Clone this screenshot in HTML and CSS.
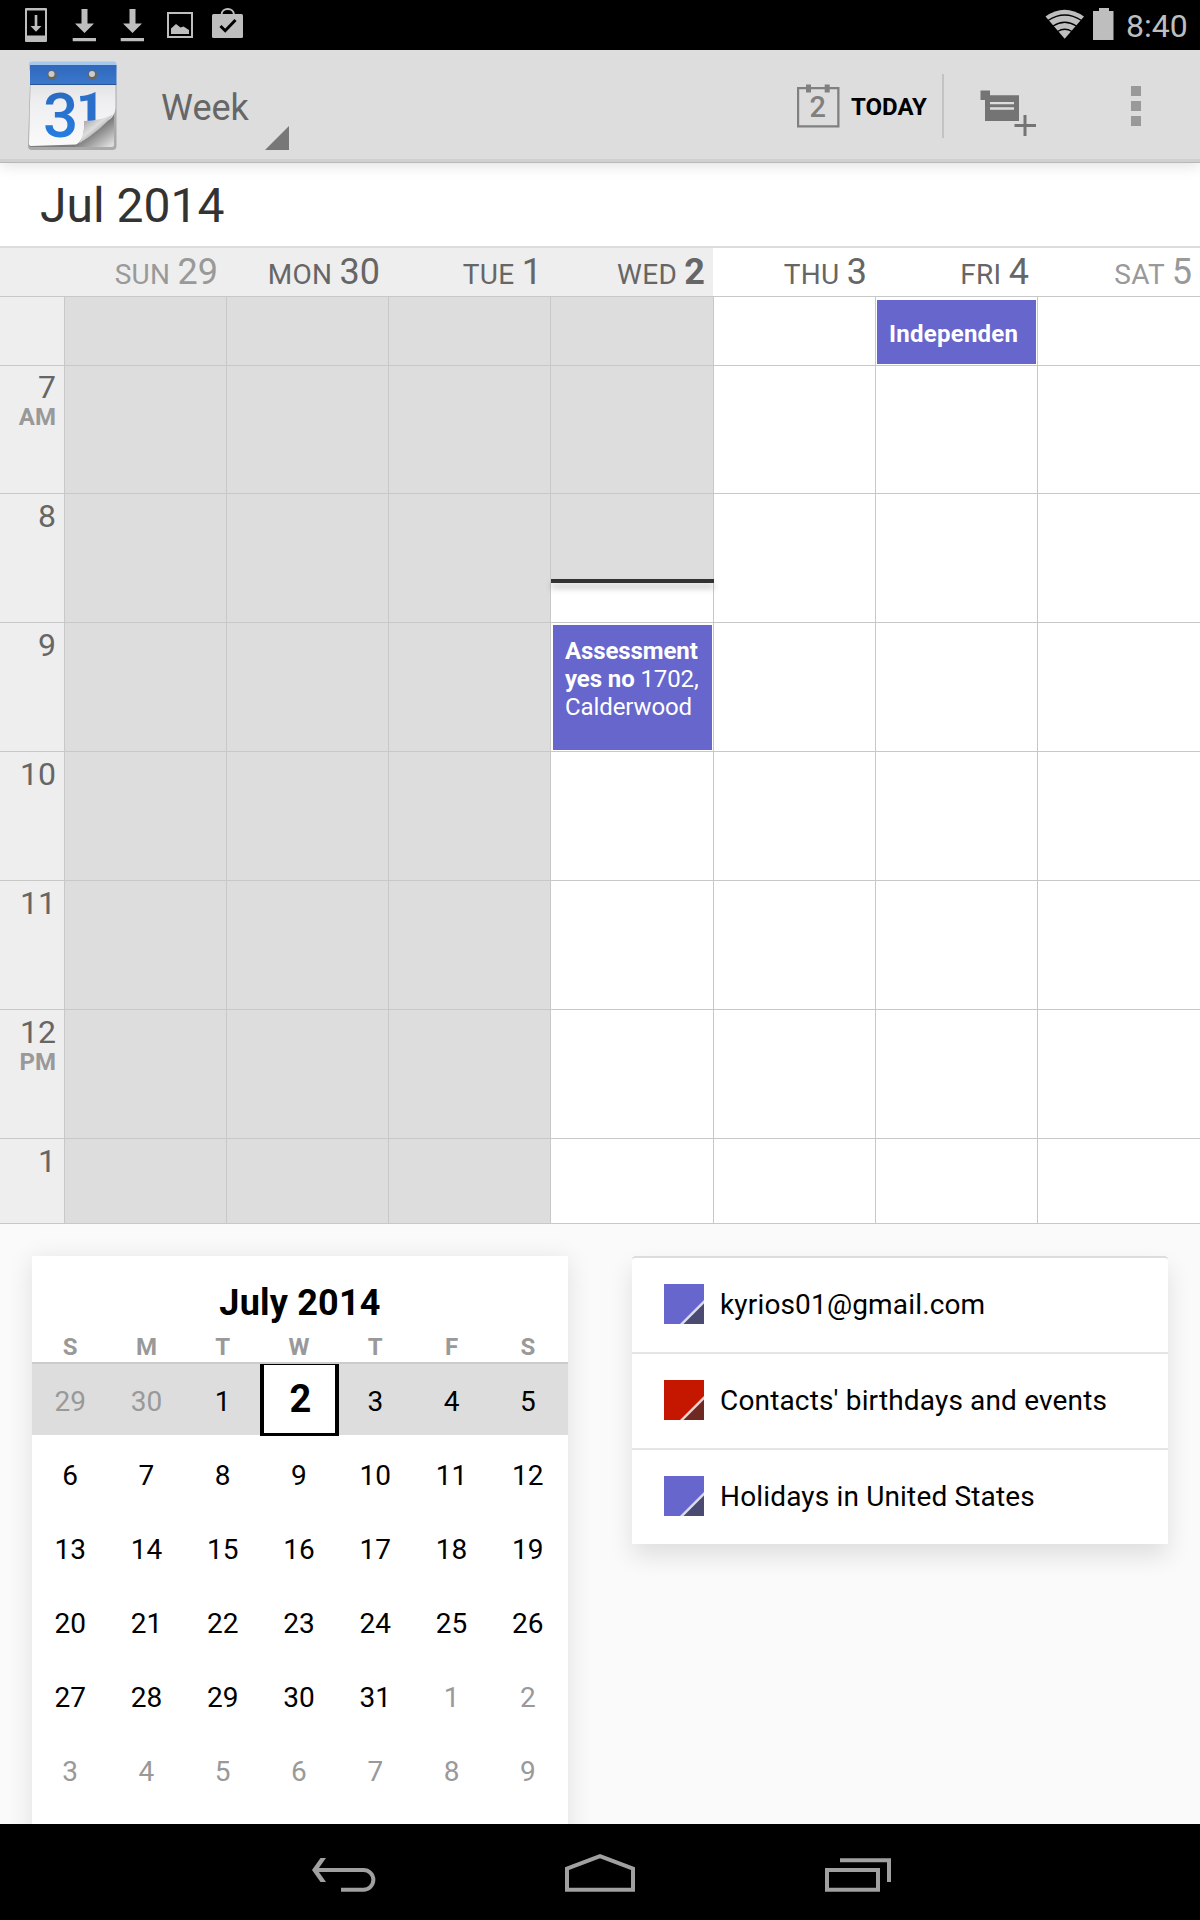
FILE: index.html
```html
<!DOCTYPE html>
<html lang="en">
<head>
<meta charset="utf-8">
<title>Calendar</title>
<link rel="stylesheet" href="styles.css">
</head>
<body>
<div class="screen">
  <div class="status-bar">
    <svg class="status-icons" width="260" height="50" viewBox="0 0 260 50" fill="#bebebe">
      <path fill-rule="evenodd" d="M26 8h20q1 0 1 1v32q0 1-1 1H26q-1 0-1-1V9q0-1 1-1zM27 10.500v25h18v-25z"/>
      <path d="M34.700 15h2.600v11h4.200L36 31.800 30.500 26h4.200z"/>
      <path id="dl" d="M81.500 9h6v14.500h6.500L84.500 33 75 23.500h6.500zM72.700 38H96v3.300H72.700z"/>
      <use href="#dl" x="48"/>
      <path fill-rule="evenodd" d="M167 12h26v26h-26zM169 14v22h22V14z"/>
      <path d="M171 34v-5.500l5-4.500 4.500 3.500 3-1 5.500 3.500v4z"/>
      <path d="M221.500 15c0-8 12.500-8 12.500 0" fill="none" stroke="#bebebe" stroke-width="2"/>
      <rect x="212" y="14" width="31" height="24" rx="1.500"/>
      <path d="M220.500 26l4.700 4.700L235.500 20" fill="none" stroke="#000" stroke-width="3"/>
    </svg>
    <svg class="status-signal" width="74" height="50" viewBox="1043 0 74 50" fill="#bebebe">
      <path d="M1045.500 16.500Q1064.500 3 1084 16.500L1064.700 38.800z"/>
      <g fill="none" stroke="#000" stroke-width="1.300">
        <path d="M1048 20.500q16.700-11 33.500 0"/><path d="M1053 26q11.700-7.500 23.500 0"/><path d="M1057.500 31.500q7.200-4.500 14.500 0"/>
      </g>
      <path d="M1099 8h10v3h4.500v29h-20.500V11h6z"/>
    </svg>
    <span class="clock">8:40</span>
  </div>

  <header class="action-bar">
    <svg class="app-icon" width="92" height="94" viewBox="27 60 92 94">
      <defs>
        <linearGradient id="paper" x1="0" y1="0" x2="0" y2="1"><stop offset="0" stop-color="#e3e3e6"/><stop offset=".3" stop-color="#efeff2"/><stop offset="1" stop-color="#fafafa"/></linearGradient>
        <linearGradient id="band" x1="0" y1="0" x2="0" y2="1"><stop offset="0" stop-color="#2f68bc"/><stop offset="1" stop-color="#3b78cb"/></linearGradient>
        <linearGradient id="curl" gradientUnits="userSpaceOnUse" x1="84" y1="121" x2="97" y2="137"><stop offset="0" stop-color="#a9a9a9"/><stop offset=".55" stop-color="#dedede"/><stop offset="1" stop-color="#9a9a9a"/></linearGradient>
        <linearGradient id="under" gradientUnits="userSpaceOnUse" x1="95" y1="131" x2="107" y2="148"><stop offset="0" stop-color="#7d7d7d"/><stop offset="1" stop-color="#dcdcdc"/></linearGradient>
        <linearGradient id="ink" x1="0" y1="0" x2="0" y2="1"><stop offset="0" stop-color="#2a66b8"/><stop offset="1" stop-color="#2482ea"/></linearGradient>
      </defs>
      <path d="M30 84h86.500v62q0 4-4 4H32q-4 0-4-4z" fill="#aaa"/>
      <path d="M31 84h83v61q0 2-2 2H31q-2 0-2-2z" fill="url(#under)"/>
      <path d="M30.500 84H115.500V108Q115 117 107 121Q96 122 84 123 85 140 76 144.500L31 146q-2.500 0-2-4z" fill="url(#paper)"/>
      <text class="icon-date" x="43" y="137" fill="url(#ink)">3</text>
      <path d="M80 96Q87 96 95.500 92V121H87.500V100.500L80.500 101.500z" fill="#2a70cb"/>
      <path d="M84 121Q101 121 114 114 101 130 79 143.500 85 134 84 121z" fill="url(#curl)"/>
      <rect x="29" y="61.500" width="87.500" height="10" rx="3" fill="#a5c8ec"/>
      <path d="M30 65h86.500v20H30z" fill="url(#band)"/>
      <path d="M30 84.500h86" stroke="#285596"/>
      <circle cx="52" cy="75" r="4.800" fill="#666"/><circle cx="51.500" cy="74" r="3" fill="#ccc"/>
      <circle cx="92.500" cy="75" r="4.800" fill="#666"/><circle cx="92" cy="74" r="3" fill="#ccc"/>
    </svg>
    <div class="view-picker">
      <span>Week</span>
      <svg width="24" height="24" viewBox="0 0 24 24"><path d="M24 0v24H0z" fill="#777"/></svg>
    </div>
    <div class="today-action">
      <svg width="44" height="44" viewBox="796 84 44 44" fill="#808080">
        <path d="M797 87h42.500v40.500H797zM799.200 89.200v36h38v-36z" fill-rule="evenodd"/>
        <path d="M806 84.500h5v8h-5zM824.700 84.500h5v8h-5z"/>
        <text class="today-date" x="817.800" y="117" text-anchor="middle">2</text>
      </svg>
      <span>TODAY</span>
    </div>
    <svg class="new-event" width="60" height="50" viewBox="978 88 60 50" fill="#747474">
      <path d="M980.500 90.500h9.500v4.700h29V121h-34v-21h-4.500z"/>
      <path d="M990 102h24v2.200h-24zM990 107.200h24v2.500h-24z" fill="#ddd"/>
      <path d="M1023.500 115h3v9h9.500v3h-9.500v9h-3v-9h-9v-3h9z"/>
    </svg>
    <svg class="overflow" width="10" height="40" viewBox="0 0 10 40" fill="#999"><path d="M0 0h10v10H0zM0 15h10v10H0zM0 30h10v10H0z"/></svg>
  </header>

  <h1 class="month-title">Jul 2014</h1>

  <section class="week">
    <div class="day-names">
      <div class="past"></div>
      <div class="past weekend">SUN <b>29</b></div>
      <div class="past">MON <b>30</b></div>
      <div class="past">TUE <b>1</b></div>
      <div class="past current">WED <b>2</b></div>
      <div>THU <b>3</b></div>
      <div>FRI <b>4</b></div>
      <div class="weekend">SAT <b>5</b></div>
    </div>
    <div class="week-grid">
      <div class="hour"></div><i class="past"></i><i class="past"></i><i class="past"></i><i class="past"></i><i></i><i><span class="event all-day">Independen</span></i><i></i>
      <div class="hour first">7<small>AM</small></div><i class="past"></i><i class="past"></i><i class="past"></i><i class="past"></i><i></i><i></i><i></i>
      <div class="hour">8</div><i class="past"></i><i class="past"></i><i class="past"></i><i class="now"><span class="now-line"></span></i><i></i><i></i><i></i>
      <div class="hour">9</div><i class="past"></i><i class="past"></i><i class="past"></i><i><span class="event"><strong>Assessment</strong> <strong>yes no</strong> 1702, Calderwood</span></i><i></i><i></i><i></i>
      <div class="hour">10</div><i class="past"></i><i class="past"></i><i class="past"></i><i></i><i></i><i></i><i></i>
      <div class="hour">11</div><i class="past"></i><i class="past"></i><i class="past"></i><i></i><i></i><i></i><i></i>
      <div class="hour">12<small>PM</small></div><i class="past"></i><i class="past"></i><i class="past"></i><i></i><i></i><i></i><i></i>
      <div class="hour">1</div><i class="past"></i><i class="past"></i><i class="past"></i><i></i><i></i><i></i><i></i>
    </div>
  </section>

  <section class="panels">
    <div class="mini-month">
      <h2>July 2014</h2>
      <div class="mini-names"><span>S</span><span>M</span><span>T</span><span>W</span><span>T</span><span>F</span><span>S</span></div>
      <div class="mini-week selected"><span class="other">29</span><span class="other">30</span><span>1</span><span class="today"><b>2</b></span><span>3</span><span>4</span><span>5</span></div>
      <div class="mini-week"><span>6</span><span>7</span><span>8</span><span>9</span><span>10</span><span>11</span><span>12</span></div>
      <div class="mini-week"><span>13</span><span>14</span><span>15</span><span>16</span><span>17</span><span>18</span><span>19</span></div>
      <div class="mini-week"><span>20</span><span>21</span><span>22</span><span>23</span><span>24</span><span>25</span><span>26</span></div>
      <div class="mini-week"><span>27</span><span>28</span><span>29</span><span>30</span><span>31</span><span class="other">1</span><span class="other">2</span></div>
      <div class="mini-week"><span class="other">3</span><span class="other">4</span><span class="other">5</span><span class="other">6</span><span class="other">7</span><span class="other">8</span><span class="other">9</span></div>
    </div>
    <ul class="calendars">
      <li><svg class="swatch blue" viewBox="0 0 40 40"><path class="fold" d="M40 16v24H16z"/><path class="corner" d="M40 19.500V40H19.500z"/></svg>kyrios01@gmail.com</li>
      <li><svg class="swatch red" viewBox="0 0 40 40"><path class="fold" d="M40 16v24H16z"/><path class="corner" d="M40 19.500V40H19.500z"/></svg>Contacts' birthdays and events</li>
      <li><svg class="swatch blue" viewBox="0 0 40 40"><path class="fold" d="M40 16v24H16z"/><path class="corner" d="M40 19.500V40H19.500z"/></svg>Holidays in United States</li>
    </ul>
  </section>

  <nav class="nav-bar">
    <svg class="back" width="66" height="36" viewBox="311 1857 66 36"><path d="M315 1870H363.500a9.700 9.700 0 0 1 0 19.700H341" /><path d="M326 1858L320.500 1858 312 1870 320.500 1882H326L317.500 1870z" class="solid"/></svg>
    <svg width="70" height="38" viewBox="565 1854 70 38"><path d="M567 1868.700L600 1856.200 633 1868.700V1889.700H567z"/></svg>
    <svg class="recents" width="67" height="36" viewBox="825 1857 67 36"><path d="M827 1870h51v19.700h-51zM840 1860.200h49V1882"/></svg>
  </nav>
</div>
</body>
</html>
```
FILE: styles.css
```css
* { box-sizing: border-box; }

body {
  margin: 0;
  background: #000;
  font-family: Roboto, "Liberation Sans", sans-serif;
}

.screen {
  width: 1200px;
  height: 1920px;
  display: flex;
  flex-direction: column;
  background: #fafafa;
  overflow: hidden;
}

svg { display: block; flex: none; }

/* Status bar */
.status-bar {
  flex: none;
  height: 50px;
  display: flex;
  background: #000;
}
.status-signal { margin-left: auto; }
.clock {
  width: 73px;
  margin-right: 10px;
  padding: 1px 0 0 9px;
  color: #bebebe;
  font-size: 32px;
  line-height: 50px;
}

/* Action bar */
.action-bar {
  flex: none;
  height: 113px;
  display: flex;
  align-items: flex-start;
  background: #ddd;
  border-bottom: 1px solid #b8b8b8;
  box-shadow: inset 0 -3px #d0d0d0, 0 2px 14px rgba(0, 0, 0, .13);
  position: relative;
}
.app-icon { margin: 10px 0 0 27px; }
.icon-date { font: 500 62px Roboto, sans-serif; }
.view-picker {
  display: flex;
  align-items: flex-end;
  height: 100px;
  width: 128px;
  margin-left: 42px;
  justify-content: space-between;
  color: #666;
  font-size: 36px;
  line-height: 84px;
}
.today-action {
  display: flex;
  align-items: center;
  height: 64px;
  margin: 24px 0 0 auto;
  width: 148px;
  border-right: 2px solid #c3c3c3;
  font-size: 24px;
  font-weight: 700;
  line-height: 64px;
}
.today-action svg { margin-right: 11px; }
.today-action span { padding-top: 2px; }
.today-date { font: 500 29px Roboto, sans-serif; }
.new-event { margin: 38px 0 0 34px; }
.overflow { margin: 36px 59px 0 93px; }

.month-title {
  flex: none;
  height: 83px;
  margin: 0;
  padding: 2px 0 0 40px;
  background: #fff;
  color: #333;
  font-size: 48px;
  font-weight: 400;
  line-height: 81px;
}

/* Week view */
.week { flex: none; background: #fff; border-top: 2px solid #ddd; }
.day-names,
.week-grid {
  display: grid;
  grid-template-columns: 64px 162px 162px 162px 163px 162px 162px 163px;
}
.day-names div {
  padding-right: 8px;
  color: #666;
  font-size: 28px;
  letter-spacing: .3px;
  line-height: 48px;
  height: 48px;
  text-align: right;
  white-space: nowrap;
}
.day-names b { font-size: 36px; font-weight: 400; line-height: 48px; letter-spacing: 0; }
.day-names .past { background: #eee; }
.day-names .weekend { color: #999; }
.day-names .current b { font-weight: 700; }

.week-grid {
  grid-template-rows: 69px 128px repeat(5, 129px) 85px;
  border-top: 1px solid #c8c8c8;
}
.week-grid > * { border-bottom: 1px solid #c8c8c8; font-style: normal; }
.week-grid > i { border-left: 1px solid #c8c8c8; position: relative; }
.week-grid .past { background: #ddd; }
.week-grid .now { background: linear-gradient(#ddd 86px, #fff 86px); }
.hour {
  padding: 2px 8px 0 0;
  background: #eee;
  color: #666;
  font-size: 32px;
  line-height: 40px;
  text-align: right;
}
.hour.first { padding-top: 1px; }
.hour small {
  display: block;
  color: #999;
  font-size: 24px;
  font-weight: 700;
  line-height: 20px;
}
.event {
  display: block;
  height: 125px;
  margin: 2px 1px 0 2px;
  padding: 12px 0 0 12px;
  background: #66c;
  color: #fff;
  font-size: 24px;
  letter-spacing: -.1px;
  line-height: 28px;
  overflow: hidden;
}
.event.all-day {
  height: 64px;
  margin: 3px 1px 0 1px;
  padding-top: 20px;
  font-weight: 700;
  letter-spacing: .25px;
}
.now-line {
  position: absolute;
  top: 85px;
  left: 0;
  width: 163px;
  height: 4px;
  background: #333;
  box-shadow: 0 5px 6px rgba(0, 0, 0, .25);
  z-index: 1;
}

/* Lower panels */
.panels {
  flex: 1;
  min-height: 0;
  display: flex;
  align-items: flex-start;
  gap: 64px;
  padding: 32px 32px 0;
  overflow: hidden;
}
.mini-month {
  width: 536px;
  height: 600px;
  padding-top: 27px;
  background: #fff;
  box-shadow: 0 4px 24px rgba(0, 0, 0, .11);
}
.mini-month h2 {
  margin: 0 0 9px;
  font-size: 36px;
  font-weight: 700;
  letter-spacing: .2px;
  line-height: 40px;
  text-align: center;
}
.mini-names,
.mini-week {
  display: grid;
  grid-template-columns: repeat(7, 1fr);
  text-align: center;
}
.mini-names {
  padding-right: 2px;
  border-bottom: 2px solid #ccc;
  color: #999;
  font-size: 24px;
  font-weight: 700;
  line-height: 30px;
}
.mini-week {
  height: 74px;
  padding-right: 2px;
  font-size: 28px;
  line-height: 76px;
}
.mini-week.selected { height: 71px; margin-bottom: 3px; background: #ddd; }
.mini-week .other { color: #999; }
.today { position: relative; }
.today b {
  position: absolute;
  top: 0;
  left: -1px;
  width: 79px;
  height: 72px;
  padding-left: 2px;
  border: solid #000;
  border-width: 1px 4px 3px;
  background: #fff;
  font-size: 38px;
  line-height: 68px;
}

.calendars {
  width: 536px;
  margin: 0;
  padding: 0;
  list-style: none;
  background: #fff;
  border-top: 2px solid #ddd;
  border-radius: 4px 4px 0 0;
  box-shadow: 0 12px 24px rgba(0, 0, 0, .11);
}
.calendars li {
  height: 96px;
  display: flex;
  padding: 26px 0 0 32px;
  border-bottom: 2px solid #e5e5e5;
  font-size: 28px;
  letter-spacing: .16px;
  line-height: 42px;
}
.calendars li:last-child { height: 94px; border: 0; }
.swatch { width: 40px; height: 40px; margin-right: 16px; }
.blue { background: #66c; }
.red { background: #c51700; }
.blue .fold { fill: #dcdcf0; }
.blue .corner { fill: #4a4a72; }
.red .fold { fill: #f0d2ce; }
.red .corner { fill: #6e2a22; }

/* Navigation bar */
.nav-bar {
  flex: none;
  height: 96px;
  display: flex;
  align-items: flex-start;
  gap: 188px;
  padding: 30px 0 0 311px;
  background: #000;
}
.nav-bar .back { margin-top: 3px; }
.nav-bar .recents { margin: 3px 0 0 2px; }
.nav-bar path { fill: none; stroke: #a0a0a0; stroke-width: 4; }
.nav-bar .solid { fill: #a0a0a0; stroke: none; }
```
